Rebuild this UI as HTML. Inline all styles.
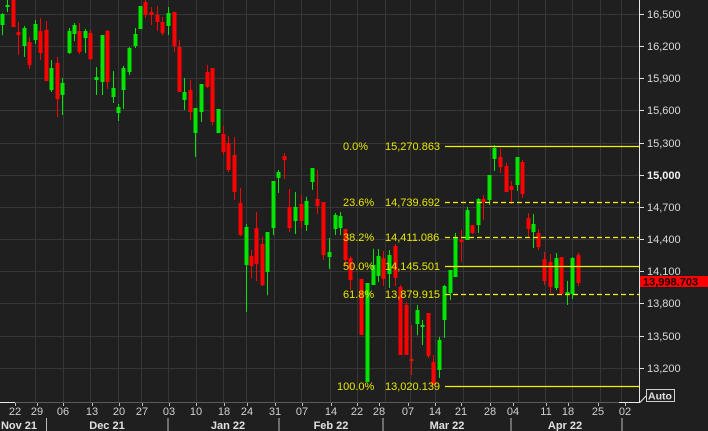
<!DOCTYPE html>
<html><head><meta charset="utf-8"><style>
html,body{margin:0;padding:0;background:#1f1f1f;width:708px;height:431px;overflow:hidden}
svg{display:block}
text{font-family:"Liberation Sans",sans-serif}
</style></head><body>
<svg id="s" width="708" height="431" xmlns="http://www.w3.org/2000/svg">
<rect width="708" height="431" fill="#1f1f1f"/>
<g id="grid" stroke="#363636" stroke-width="1"></g>
<g id="candles"></g>
<g id="fib" font-size="11" fill="#e6e600"></g>
<line x1="639.5" y1="0" x2="639.5" y2="402" stroke="#e8e8e8"/>
<line x1="0" y1="402.5" x2="15" y2="402.5" stroke="#e8e8e8"/>
<line x1="15" y1="402.5" x2="619" y2="402.5" stroke="#5a5a5a"/>
<line x1="619" y1="402.5" x2="640" y2="402.5" stroke="#e8e8e8"/>
<line x1="640" y1="402.5" x2="646" y2="396" stroke="#e8e8e8"/>
<g id="py" font-size="11" fill="#d8d8d8"></g>
<rect x="640" y="276" width="68" height="11" fill="#ff0000"/>
<text x="643" y="285.5" font-size="11" font-weight="bold" fill="#1a0000">13,998.703</text>
<rect x="646.5" y="389.5" width="28" height="12" fill="none" stroke="#cfcfcf"/>
<text x="648" y="399.5" font-size="10.5" font-weight="bold" fill="#e0e0e0">Auto</text>
<g id="xa" font-size="11" fill="#d0d0d0"></g>
<g id="mo" font-size="11" font-weight="bold" fill="#e0e0e0"></g>
</svg>
<script>
var NS="http://www.w3.org/2000/svg";
function el(p,t,a,txt){var e=document.createElementNS(NS,t);for(var k in a)e.setAttribute(k,a[k]);if(txt!=null)e.textContent=txt;document.getElementById(p).appendChild(e);return e;}
// grid
var hy=[14,46,78,110,143,175,207,239,271,303,336,368];
hy.forEach(function(y){el("grid","line",{x1:0,x2:639,y1:y+.5,y2:y+.5});});
var vx=[35,63,90,118,141,168,196,223,246,274,301,330,357,385,410,435,463,490,518,545,572,600,621];
vx.forEach(function(x){el("grid","line",{x1:x+.5,x2:x+.5,y1:0,y2:402});});
// candles [x,wt,wb,bt,bb,green]
var C=[[2,13,35,14,25,1],[7,0,12,5,7,1],[13,0,27,0,27,0],[18,22,55,32,35,0],[24,26,57,28,46,1],[29,37,69,42,65,0],[35,20,44,24,40,1],[40,18,60,31,53,0],[46,21,81,30,81,0],[51,60,92,68,90,1],[57,57,117,63,99,0],[62,78,115,83,95,1],[69,28,54,31,53,1],[74,23,41,25,34,1],[79,23,54,31,52,0],[85,29,53,31,38,1],[90,30,60,33,59,0],[96,67,95,77,80,1],[102,35,95,35,82,1],[107,30,89,31,82,0],[113,71,103,88,97,1],[118,104,121,107,113,1],[123,66,109,68,90,1],[129,47,75,48,72,1],[135,28,48,34,46,1],[140,6,29,6,29,1],[145,0,18,2,15,0],[151,7,25,12,15,0],[157,6,31,15,22,0],[162,17,35,22,33,0],[168,7,35,13,26,1],[174,12,52,12,46,0],[179,40,92,47,92,0],[184,78,110,92,100,1],[190,80,120,90,112,0],[195,108,157,108,133,1],[201,84,122,84,112,1],[207,65,88,72,87,0],[212,68,125,68,122,0],[218,109,133,109,133,1],[223,126,155,134,152,0],[228,136,172,143,170,0],[234,137,200,155,192,0],[240,188,236,203,235,0],[246,224,312,227,265,1],[251,250,278,256,266,0],[256,212,281,228,264,0],[262,237,286,244,285,0],[267,232,295,232,272,1],[273,181,235,181,228,1],[278,170,193,172,178,1],[284,153,179,156,160,0],[289,189,232,207,228,0],[295,192,234,207,221,1],[301,195,228,204,221,0],[306,197,231,201,225,1],[312,168,190,168,182,1],[317,170,214,199,206,0],[323,202,260,202,255,0],[329,238,269,252,257,1],[335,213,235,215,229,1],[340,212,235,216,228,1],[345,229,265,229,260,0],[350,256,290,258,280,0],[361,279,335,279,335,0],[367,283,382,283,382,1],[373,249,285,265,285,1],[378,249,282,256,276,1],[383,251,286,258,279,0],[389,250,288,255,274,1],[395,244,286,246,278,0],[400,285,355,287,355,0],[406,302,355,305,355,0],[411,325,375,359,361,0],[417,305,335,310,324,1],[422,320,345,325,327,1],[428,313,358,313,356,0],[433,355,385,362,385,0],[439,337,378,340,370,1],[444,285,338,286,320,1],[450,270,300,270,293,1],[455,233,277,237,277,1],[461,230,262,240,242,0],[467,207,240,210,240,1],[472,225,234,225,233,0],[478,198,233,199,225,1],[483,195,220,199,202,0],[489,175,205,175,200,1],[494,145,171,148,159,1],[500,149,173,157,167,0],[506,163,192,166,192,0],[511,181,204,186,190,0],[517,157,191,157,185,1],[522,160,198,162,194,0],[528,213,238,218,229,0],[533,214,248,224,232,1],[538,229,250,233,247,0],[544,252,285,259,281,0],[550,254,293,262,287,0],[556,253,290,258,288,1],[561,257,294,257,294,0],[567,281,305,292,295,1],[572,257,299,258,294,1],[578,253,286,255,283,0]];
C.forEach(function(c){var col=c[5]?"#00e600":"#ff0000";
el("candles","line",{x1:c[0]+.5,x2:c[0]+.5,y1:c[1],y2:c[2],stroke:col});
el("candles","rect",{x:c[0]-1.5,y:c[3],width:4,height:Math.max(2,c[4]-c[3]),fill:col});});
// fib
var F=[["0.0%","15,270.863",146,0],["23.6%","14,739.692",202,1],["38.2%","14,411.086",237,1],["50.0%","14,145.501",266,0],["61.8%","13,879.915",294,1],["100.0%","13,020.139",386,0]];
F.forEach(function(f){var a={x1:445,x2:639,y1:f[2]+.5,y2:f[2]+.5,stroke:"#f0f000","stroke-width":1.3};if(f[3])a["stroke-dasharray"]="5,3";el("fib","line",a);
el("fib","text",{x:f[0].length>5?337:343,y:f[2]+4},f[0]);el("fib","text",{x:385,y:f[2]+4},f[1]);});
// price axis
var P=["16,500","16,200","15,900","15,600","15,300","15,000","14,700","14,400","14,100","13,800","13,500","13,200"];
P.forEach(function(p,i){var y=hy[i];el("py","line",{x1:640,x2:644,y1:y+.5,y2:y+.5,stroke:"#e0e0e0"});
var t=el("py","text",{x:647,y:y+4},p);if(p=="15,000"){t.setAttribute("font-weight","bold");t.setAttribute("fill","#f0f0f0");}});
// x axis
var X=[["22",15],["29",37],["06",63],["13",92],["20",119],["27",142],["03",169],["10",196],["18",224],["24",247],["31",275],["07",302],["14",331],["22",357],["28",379],["07",408],["14",435],["21",461],["28",490],["04",513],["11",546],["18",568],["25",598],["02",625]];
X.forEach(function(t){el("xa","line",{x1:t[1]+.5,x2:t[1]+.5,y1:403,y2:406,stroke:"#bbb"});el("xa","text",{x:t[1],y:415,"text-anchor":"middle"},t[0]);});
[46.5,168,279,383,511,622].forEach(function(x){el("mo","line",{x1:x,x2:x,y1:418,y2:431,stroke:"#bbb"});});
[["Nov 21",19],["Dec 21",107],["Jan 22",228],["Feb 22",331],["Mar 22",447],["Apr 22",565]].forEach(function(m){el("mo","text",{x:m[1],y:429,"text-anchor":"middle"},m[0]);});
</script>
</body></html>
